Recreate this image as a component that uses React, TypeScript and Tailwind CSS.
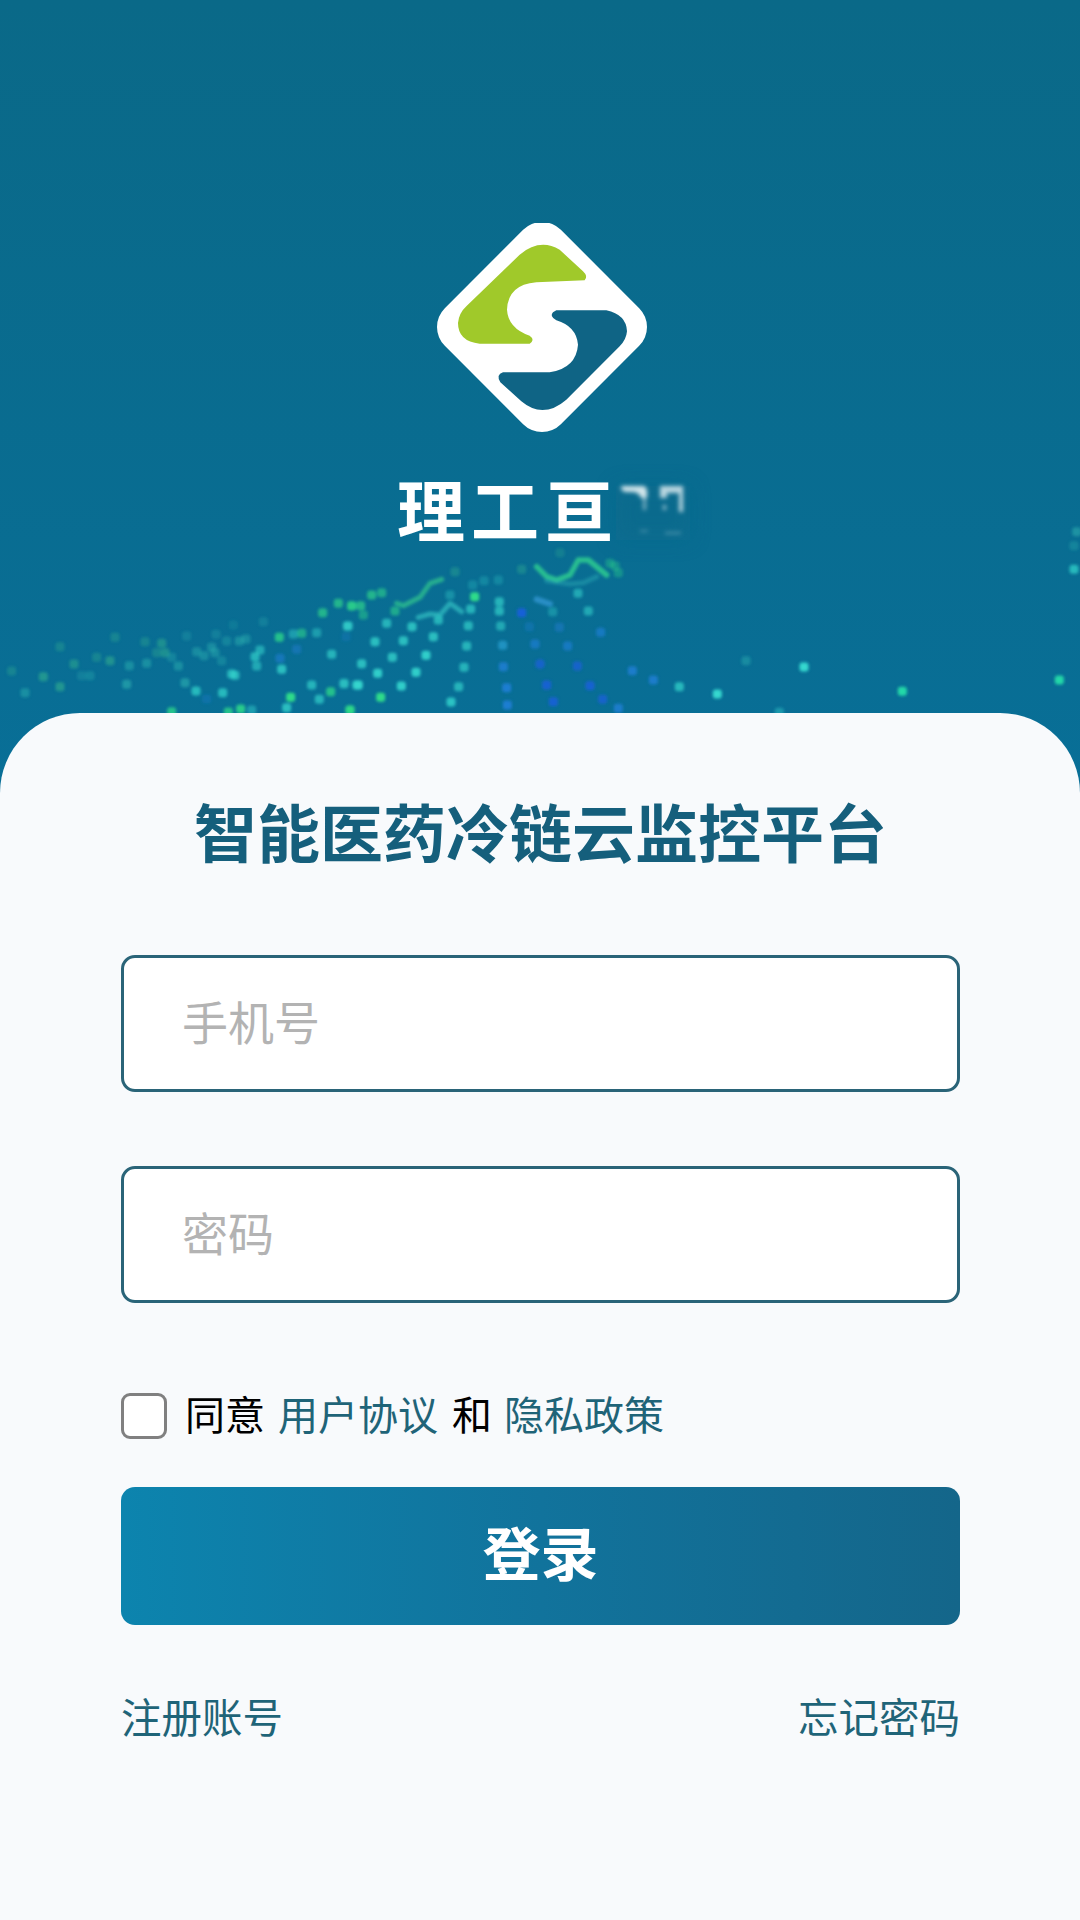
import React from "react";

type Dot = [number, number, string, number?];
const T = "#35d8cf";
const TD = "#2fb8b4";
const G = "#2fdc8a";
const GD = "#35b88e";
const B = "#1f7fd8";
const BD = "#1560d8";

const z4: Dot[] = [
  [35,393,GD,0.3],[180,320,GD,0.3],[345,292,GD,0.3],[290,352,GD,0.3],[222,372,GD,0.45],[330,362,GD,0.5],[130,410,GD,0.55],[180,440,GD,0.55],[75,458,TD,0.45],[485,310,GD,0.45],[495,338,GD,0.45],[435,305,GD,0.3],[470,338,GD,0.3],
  [245,407,TD,0.25],[270,407,TD,0.3],[388,377,TD,0.45],[440,370,TD,0.45],[380,433,TD,0.55],[535,378,TD,0.45],[515,352,TD,0.3],[555,428,TD,0.55],[560,288,TD,0.25],[590,335,TD,0.4],[612,347,TD,0.4],[635,322,TD,0.4],[645,338,TD,0.4],[648,283,TD,0.25],[680,303,TD,0.3],[718,303,TD,0.45],[738,297,TD,0.4],[790,245,TD,0.25],[700,255,TD,0.18],[665,362,TD,0.3],
  [588,453,T,0.7],[668,458,T,0.7],[695,402,T,0.65],[705,406,T,0.65],[780,330,T,0.55],[765,350,T,0.65],[770,378,T,0.55],[845,388,T,0.75],[838,292,G,0.75],[935,435,T,0.65],[958,478,T,0.65],[992,455,G,0.75],[1032,430,T,0.55],[1070,435,T,0.75],[860,503,T,0.75],[872,472,G,1],[968,218,G,0.65],[1015,190,G,0.65],[1055,198,G,0.65],[1045,258,T,0.55],[950,278,T,0.45],[905,280,G,0.55],[880,282,T,0.45],[995,343,T,0.65],[890,328,B,0.45],[840,355,B,0.55],[722,507,G,0.85],[685,516,G,0.75],[515,515,G,0.75],[1050,510,G,0.75],[755,510,T,0.45],[620,477,B,0.3],
];
const z5: Dot[] = [
  [22,258,T,0.65],[105,305,T,0.75],[190,302,T,0.75],[280,290,T,0.75],[216,260,T,0.75],[140,250,T,0.65],[295,240,T,0.65],[385,257,T,0.65],[380,318,T,0.65],[258,346,T,0.9],[157,352,T,0.75],[65,371,T,0.75],[113,400,T,0.9],[228,397,T,0.9],[372,382,T,0.65],[55,435,T,0.9],[12,432,T,0.45],[184,438,T,0.9],[356,440,T,0.65],[122,472,G,1],[333,486,T,0.8],[30,510,G,0.85],[404,170,G,1],[392,207,T,0.65],[165,213,G,0.55],[70,225,G,0.45],
  [482,258,T,0.55],[488,316,"#2aa6d8",0.65],[490,380,B,0.8],[500,443,B,0.9],[502,495,B,0.9],[585,312,B,0.65],[600,372,BD,0.8],[620,435,BD,0.9],[640,485,BD,0.9],[683,318,B,0.65],[712,378,BD,0.8],[750,437,BD,0.9],[788,478,BD,0.8],[835,505,B,0.8],[877,392,B,0.8],[940,420,B,0.8],[1018,440,T,0.7],[782,277,B,0.65],[658,262,B,0.45],[568,260,B,0.35],[545,218,BD,1],[745,213,T,0.55],[714,160,T,0.55],[638,215,T,0.35],[478,185,T,0.65],[478,213,T,0.65],[475,120,T,0.25],[432,122,T,0.25],[398,135,T,0.25],[330,165,T,0.35],
  [18,290,B,0.25],[35,197,G,0.55],[62,197,G,0.65],[95,165,G,0.65],[125,158,G,0.55],[545,88,GD,0.35],[345,95,GD,0.35],[660,38,GD,0.25],[810,70,G,0.35],[825,78,G,0.35],[835,98,G,0.35],
];
const z6: Dot[] = [
  [52,642,T,1],[312,561,T,1],[607,634,"#22d8a8",1],[1078,600,"#22d8a8",1],[1122,268,T,0.7],[1130,155,TD,0.5],[1122,197,TD,0.3],[138,542,TD,0.4],[238,697,T,0.4],
];

const dots: Dot[] = [
  ...z4.map(([x, y, c, o]): Dot => [x / 3, 540 + y / 3, c, o]),
  ...z5.map(([x, y, c, o]): Dot => [340 + x / 3, 540 + y / 3, c, o]),
  ...z6.map(([x, y, c, o]): Dot => [700 + x / 3, 480 + y / 3, c, o]),
];

const wave = (pts: string) =>
  pts
    .trim()
    .split(/\s+/)
    .map((p) => {
      const [x, y] = p.split(",").map(Number);
      return `${340 + x / 3},${540 + y / 3}`;
    })
    .join(" ");

function HeroArt() {
  return (
    <svg className="absolute left-0 top-0" width="1080" height="713" viewBox="0 0 1080 713">
      <defs>
        <filter id="soft" x="-100%" y="-100%" width="300%" height="300%">
          <feGaussianBlur stdDeviation="1.5" />
        </filter>
        <filter id="softLine" x="-20%" y="-20%" width="140%" height="140%">
          <feGaussianBlur stdDeviation="1.5" />
        </filter>
        <filter id="patch" x="-50%" y="-50%" width="200%" height="200%">
          <feGaussianBlur stdDeviation="10" />
        </filter>
        <filter id="smudge" x="-50%" y="-50%" width="200%" height="200%">
          <feGaussianBlur stdDeviation="2" />
        </filter>
      </defs>
      <g filter="url(#softLine)" fill="none" strokeLinejoin="round" strokeLinecap="round">
        <polyline points={wave("170,190 190,197 240,172 270,130 305,118")} stroke="#35d88e" strokeWidth="5" opacity="0.6" />
        <polyline points={wave("235,232 270,222 300,225 330,190 365,215")} stroke="#35c8c8" strokeWidth="5" opacity="0.65" />
        <polyline points={wave("590,80 620,110 650,120 690,105 715,60 745,60 800,105")} stroke="#35e090" strokeWidth="5.5" opacity="0.7" />
        <polyline points={wave("620,122 690,132 730,128 770,110")} stroke="#35c0c0" strokeWidth="5" opacity="0.35" />
        <polyline points={wave("590,178 630,192")} stroke="#3aa0e0" strokeWidth="6" opacity="0.65" />
      </g>
      <g filter="url(#soft)">
        {dots.map(([x, y, c, o], i) => (
          <rect key={i} x={x - 4.5} y={y - 4.5} width="9" height="9" rx="3" fill={c} opacity={o ?? 1} />
        ))}
      </g>
      <rect x="616" y="486" width="74" height="54" fill="#0c6b8b" opacity="0.6" filter="url(#patch)" />
      <g filter="url(#smudge)" fill="#f4fbfc">
        <path d="M622 486 h22 q4 1 3 12 h-6 q-2 -6 -8 -6 h-6 q-6 0 -6 -5 z" opacity="0.85" />
        <rect x="643" y="498" width="3" height="12" opacity="0.5" />
        <path d="M660 486 h23 v26 h-4 v-19 h-12 v5 h-7 z" opacity="0.75" />
        <rect x="663" y="505" width="3" height="5" opacity="0.6" />
        <rect x="640" y="530" width="8" height="2" opacity="0.25" />
        <rect x="665" y="532" width="16" height="2" opacity="0.3" />
      </g>
    </svg>
  );
}

function Logo() {
  return (
    <svg className="block" width="210" height="210" viewBox="172 100 630 630">
      <polygon points="487,177 722,412 487,647 252,412" fill="#ffffff" stroke="#ffffff" strokeWidth="160" strokeLinejoin="round" />
      <path
        d="M615 272 L470 278 Q385 285 382 360 Q385 415 450 438 Q467 450 450 462 L300 462 Q235 455 235 400 Q238 370 260 350 L420 195 Q480 145 540 180 L610 245 Q626 260 615 272 Z"
        fill="#a0c92a"
      />
      <path
        d="M530 362 L680 362 Q740 375 742 425 Q740 450 720 470 L560 630 Q490 690 425 635 L362 578 Q348 555 370 548 L510 548 Q590 535 595 465 Q590 410 530 392 Q508 380 520 368 Z"
        fill="#0f6485"
      />
    </svg>
  );
}

export default function App() {
  return (
    <div
      className="relative flex h-[1920px] w-[1080px] flex-col overflow-hidden bg-gradient-to-b from-[#0a6988] via-[#08709a] to-[#087596]"
      style={{ fontFamily: '"Noto Sans CJK SC", "Noto Sans", sans-serif' }}
    >
      <HeroArt />
      <div className="relative flex h-[713px] flex-col items-center pt-[223px] pl-[4px]">
        <Logo />
        <div className="mt-[41px] -ml-[4px] flex w-[286px] items-center text-[68px] font-bold leading-[68px] tracking-[6px] text-white">
          理工亘
        </div>
      </div>
      <div className="relative flex flex-1 flex-col rounded-t-[80px] bg-[#f8fafc] pl-[121px] pr-[120px] pt-[82px]">
        <h1 className="whitespace-nowrap text-center text-[63px] font-bold leading-[70px] text-[#155f7c]">
          智能医药冷链云监控平台
        </h1>
        <input
          readOnly
          placeholder="手机号"
          className="mt-[90px] h-[137px] w-full rounded-[14px] border-[3px] border-[#2a6478] bg-white pb-[8px] pl-[58px] text-[46px] outline-none placeholder:text-[#b3b3b3]"
        />
        <input
          readOnly
          placeholder="密码"
          className="mt-[74px] h-[137px] w-full rounded-[14px] border-[3px] border-[#2a6478] bg-white pb-[8px] pl-[58px] text-[46px] outline-none placeholder:text-[#b3b3b3]"
        />
        <div className="mt-[90px] flex h-[46px] items-center text-[40px] leading-[40px]">
          <div className="h-[46px] w-[46px] rounded-[9px] border-[3px] border-[#808080] bg-white" />
          <span className="ml-[18px] -translate-y-[3px] text-black">同意</span>
          <span className="ml-[13px] -translate-y-[3px] text-[#1f6478]">用户协议</span>
          <span className="ml-[14px] -translate-y-[3px] text-black">和</span>
          <span className="ml-[12px] -translate-y-[3px] text-[#1f6478]">隐私政策</span>
        </div>
        <button className="mt-[48px] flex h-[138px] w-full items-start justify-center rounded-[14px] bg-gradient-to-r from-[#0c84ae] via-[#11739c] to-[#14668a] pt-[30px] text-[58px] font-bold leading-[68px] text-white">
          登录
        </button>
        <div className="mt-[71px] flex justify-between text-[40.5px] leading-[40px] text-[#1f6478]">
          <span>注册账号</span>
          <span>忘记密码</span>
        </div>
      </div>
    </div>
  );
}
